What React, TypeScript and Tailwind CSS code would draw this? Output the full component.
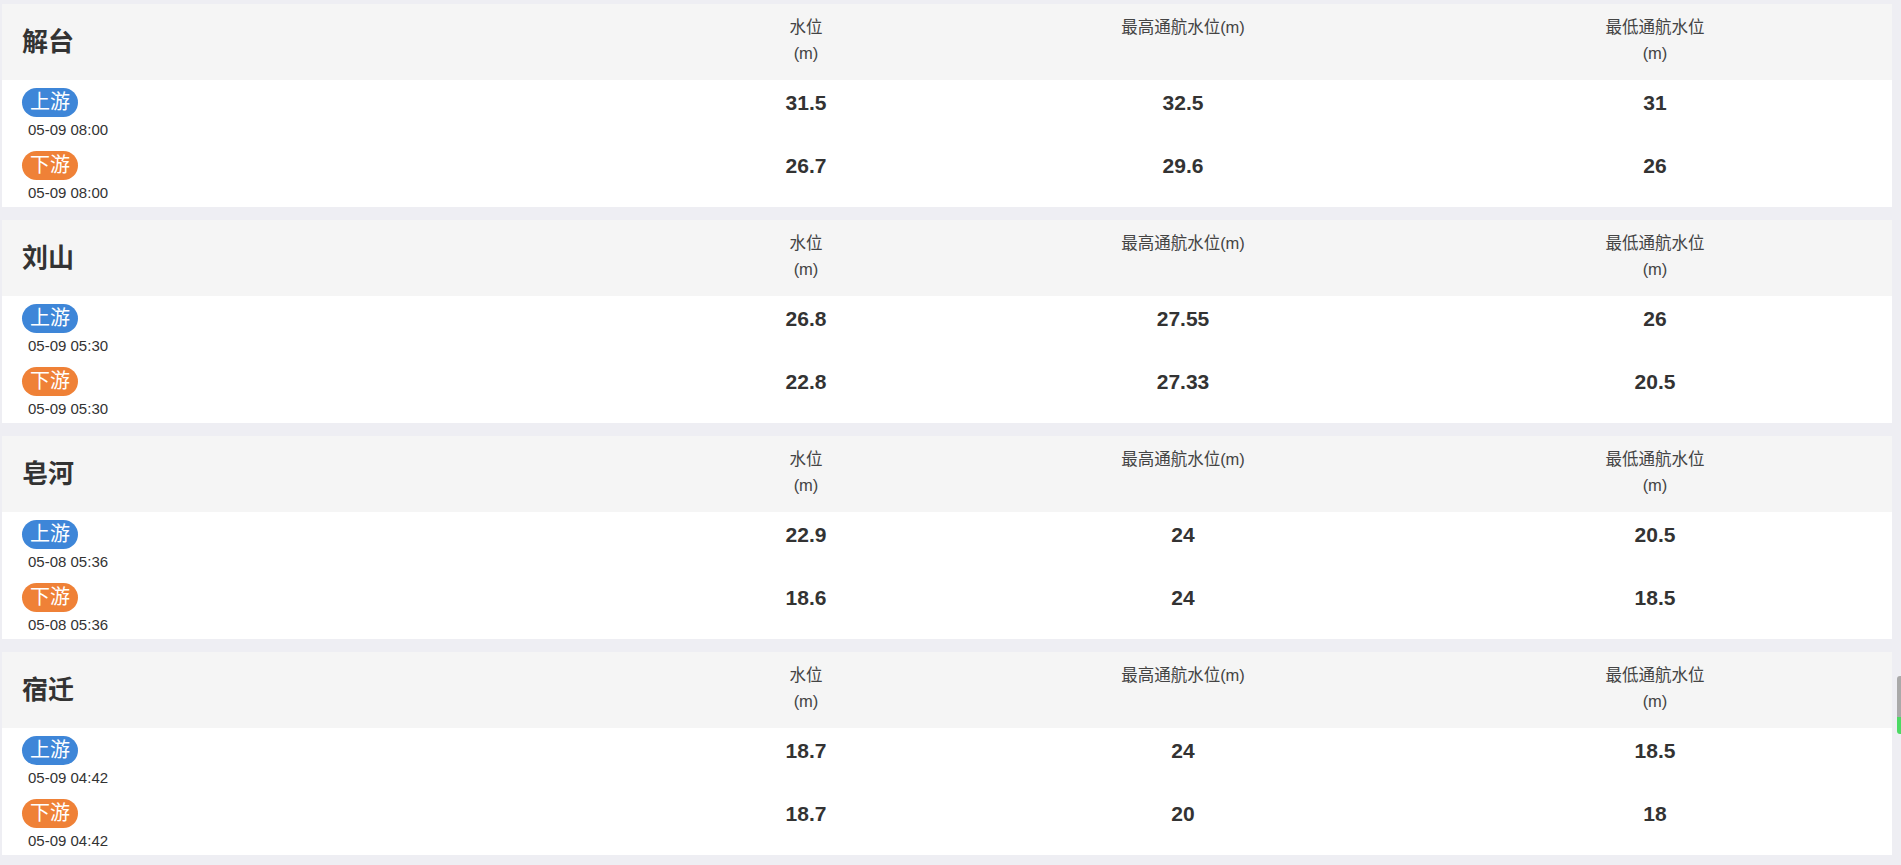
import React from "react";

type Row = { kind: "up" | "down"; time: string; vals: [string, string, string] };
type Station = { name: string; rows: Row[] };

const data: Station[] = [
  {
    name: "解台",
    rows: [
      { kind: "up", time: "05-09 08:00", vals: ["31.5", "32.5", "31"] },
      { kind: "down", time: "05-09 08:00", vals: ["26.7", "29.6", "26"] },
    ],
  },
  {
    name: "刘山",
    rows: [
      { kind: "up", time: "05-09 05:30", vals: ["26.8", "27.55", "26"] },
      { kind: "down", time: "05-09 05:30", vals: ["22.8", "27.33", "20.5"] },
    ],
  },
  {
    name: "皂河",
    rows: [
      { kind: "up", time: "05-08 05:36", vals: ["22.9", "24", "20.5"] },
      { kind: "down", time: "05-08 05:36", vals: ["18.6", "24", "18.5"] },
    ],
  },
  {
    name: "宿迁",
    rows: [
      { kind: "up", time: "05-09 04:42", vals: ["18.7", "24", "18.5"] },
      { kind: "down", time: "05-09 04:42", vals: ["18.7", "20", "18"] },
    ],
  },
];

const font = {
  fontFamily: '"Liberation Sans", Arial, "Noto Sans CJK SC", sans-serif',
};

function Card({ s }: { s: Station }) {
  return (
    <div className="bg-white pb-[1px]">
      <div className="grid grid-cols-[662px_284px_470px_474px] h-[76px] bg-[#f5f5f5] text-[#444] text-[16.5px] leading-[26px]">
        <div className="flex items-center pl-[20px] text-[26px] font-bold text-[#333]">{s.name}</div>
        <div className="text-center pt-[10px]">
          <div>水位</div>
          <div>(m)</div>
        </div>
        <div className="text-center pt-[10px]">
          <div>最高通航水位(m)</div>
        </div>
        <div className="text-center pt-[10px]">
          <div>最低通航水位</div>
          <div>(m)</div>
        </div>
      </div>
      {s.rows.map((r, i) => (
        <div key={i} className="grid grid-cols-[662px_284px_470px_474px] pt-[8px]">
          <div className="flex flex-col items-start pl-[20px]">
            <span
              className={
                "h-[29px] leading-[29px] px-[8px] rounded-full text-white text-[20px] " +
                (r.kind === "up" ? "bg-[#3e86d8]" : "bg-[#ef8137]")
              }
            >
              {r.kind === "up" ? "上游" : "下游"}
            </span>
            <span className="ml-[6px] text-[15px] leading-[26px] text-[#333]">{r.time}</span>
          </div>
          {r.vals.map((v, j) => (
            <div key={j} className="h-[29px] leading-[29px] text-center text-[21px] font-bold text-[#333]">
              {v}
            </div>
          ))}
        </div>
      ))}
    </div>
  );
}

export default function App() {
  return (
    <div className="relative min-h-[865px] bg-[#eeeef3] pt-[4px] pl-[2px] pr-[9px] pb-[11px]" style={font}>
      <div className="flex flex-col gap-[13px]">
        {data.map((s) => (
          <Card key={s.name} s={s} />
        ))}
      </div>
      <div className="absolute right-0 top-[676px] w-[4px] h-[58px] rounded-l-[3px] overflow-hidden flex flex-col">
        <div className="flex-1 bg-[#a9a9a9]" />
        <div className="h-[17px] bg-[#4cd964]" />
      </div>
    </div>
  );
}
